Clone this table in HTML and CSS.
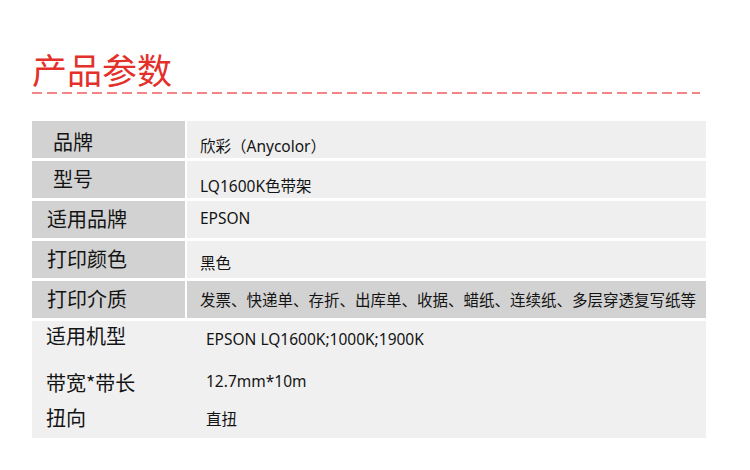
FILE: index.html
```html
<!DOCTYPE html>
<html lang="zh">
<head>
<meta charset="utf-8">
<title>产品参数</title>
<link rel="stylesheet" href="styles.css">
</head>
<body>
<div class="page">
  <h1 class="title">产品参数</h1>
  <div class="dash"></div>
  <div class="table">
    <div class="row r1"><div class="label ind">品牌</div><div class="value">欣彩（Anycolor）</div></div>
    <div class="row r2"><div class="label ind">型号</div><div class="value">LQ1600K色带架</div></div>
    <div class="row r3"><div class="label">适用品牌</div><div class="value">EPSON</div></div>
    <div class="row r4"><div class="label">打印颜色</div><div class="value">黑色</div></div>
    <div class="row r5"><div class="label">打印介质</div><div class="value dark">发票、快递单、存折、出库单、收据、蜡纸、连续纸、多层穿透复写纸等</div></div>
    <div class="block">
      <div class="brow b1"><div class="blabel">适用机型</div><div class="bvalue">EPSON LQ1600K;1000K;1900K</div></div>
      <div class="brow b2"><div class="blabel">带宽*带长</div><div class="bvalue">12.7mm*10m</div></div>
      <div class="brow b3"><div class="blabel">扭向</div><div class="bvalue">直扭</div></div>
    </div>
  </div>
</div>
</body>
</html>
```
FILE: styles.css
```css
html, body {
  margin: 0;
  padding: 0;
  background: #ffffff;
}
body {
  font-family: "Noto Sans", "Noto Sans CJK SC", sans-serif;
  color: #141414;
}
.page {
  padding-left: 32px;
  width: 674px;
}
.title {
  margin: 49px 0 0 0;
  font-family: "Noto Sans CJK SC", sans-serif;
  font-weight: 400;
  font-size: 35px;
  line-height: 40px;
  color: #e4302b;
  letter-spacing: 0;
}
.dash {
  margin-top: 3px;
  width: 668px;
  height: 2px;
  background: repeating-linear-gradient(90deg, #f28686 0 10px, transparent 10px 15px);
}
.table {
  margin-top: 27px;
  display: flex;
  flex-direction: column;
  gap: 3px;
}
.row {
  display: grid;
  grid-template-columns: 153px 519px;
  column-gap: 2px;
  height: 37px;
}
.label {
  background: #d2d2d2;
  font-family: "Noto Sans CJK SC", sans-serif;
  font-size: 20px;
  line-height: 24px;
  padding: 6px 0 0 15px;
}
.label.ind {
  padding-left: 21px;
}
.r1 .label { padding-top: 9px; }
.value {
  background: #efefef;
  font-size: 15.5px;
  line-height: 20px;
  padding: 10px 0 0 13px;
  white-space: nowrap;
}
.value.dark {
  background: #d2d2d2;
  padding-top: 9px;
}
.r1 .value { padding-top: 15px; }
.r2 .value { padding-top: 15px; }
.r3 .value { padding-top: 7px; }
.r4 .value { padding-top: 12px; }
.block {
  background: #f0f0f0;
  height: 117px;
  display: flex;
  flex-direction: column;
}
.brow {
  display: grid;
  grid-template-columns: 155px 519px;
}
.b1 { height: 47px; }
.b2 { height: 35px; }
.b3 { height: 35px; }
.blabel {
  font-family: "Noto Sans CJK SC", sans-serif;
  font-size: 20px;
  line-height: 24px;
  padding: 3px 0 0 14px;
}
.bvalue {
  font-size: 15.5px;
  line-height: 20px;
  padding-left: 19px;
}
.b1 .bvalue { padding-top: 8px; }
.b2 .bvalue { padding-top: 3px; }
.b3 .bvalue { padding-top: 6px; }
```
